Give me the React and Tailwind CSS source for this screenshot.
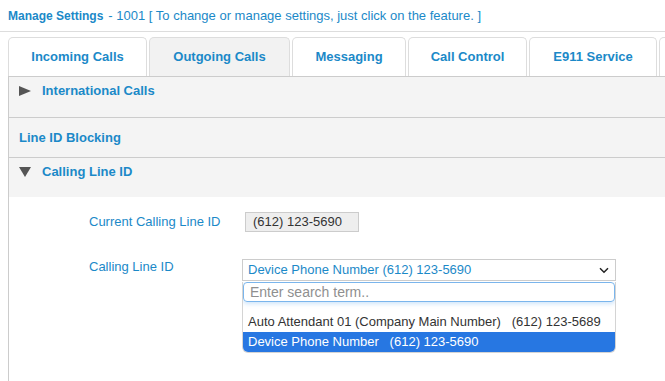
import React from "react";

const tabs = [
    { label: "Incoming Calls", w: "w-[139px]" },
    { label: "Outgoing Calls", w: "w-[141px]", active: true },
    { label: "Messaging", w: "w-[114px]" },
    { label: "Call Control", w: "w-[119px]" },
    { label: "E911 Service", w: "w-[128px]" },
];

function Triangle({ down }) {
    return (
        <svg width="12" height="11" viewBox="0 0 12 11" className="shrink-0">
            {down ? <polygon points="0,0 12,0 6,10" fill="#555" /> : <polygon points="0,0 12,5 0,10" fill="#555" />}
        </svg>
    );
}

export default function App() {
    return (
        <div className="w-[665px] h-[381px] overflow-hidden bg-white font-['Liberation_Sans',Arial,sans-serif] text-[#1b89c8]">
            {/* header */}
            <div className="h-[32px] border-b border-[#ddd] pl-[8px] flex items-center whitespace-nowrap">
                <span className="font-bold text-[12px]">Manage Settings</span>
                <span className="text-[13px] ml-[5px]">- 1001 [ To change or manage settings, just click on the feature. ]</span>
            </div>

            {/* tabs */}
            <div className="mt-[5px] pl-[8px] flex gap-[2px] overflow-hidden whitespace-nowrap">
                {tabs.map((t) => (
                    <div
                        key={t.label}
                        className={`shrink-0 ${t.w} h-[39px] flex items-center justify-center border border-b-0 border-[#ddd] rounded-t-[5px] text-[13px] font-bold ${t.active ? "bg-[#f2f2f2]" : "bg-white"}`}
                    >
                        {t.label}
                    </div>
                ))}
                <div className="shrink-0 w-[100px] h-[39px] border border-b-0 border-[#ddd] rounded-t-[5px] bg-white" />
            </div>

            {/* panel */}
            <div className="ml-[8px] border-l border-t border-[#ccc] h-[400px]">
                <div className="bg-[#f4f4f4] text-[13px] font-bold">
                    <div className="h-[41px] border-b border-[#ccc] flex items-start pt-[6px] pl-[10px] gap-[11px] leading-[16px]">
                        <span className="mt-[3px]"><Triangle /></span>
                        <span>International Calls</span>
                    </div>
                    <div className="h-[40px] border-b border-[#ccc] flex items-center pl-[10px] leading-[16px]">
                        Line ID Blocking
                    </div>
                    <div className="h-[39px] flex items-start pt-[6px] pl-[10px] gap-[11px] leading-[16px]">
                        <span className="mt-[3px]"><Triangle down /></span>
                        <span>Calling Line ID</span>
                    </div>
                </div>

                <div className="bg-white pt-[15px] pl-[80px] text-[13px] leading-[16px]">
                    <div className="flex items-center">
                        <div className="w-[156px]">Current Calling Line ID</div>
                        <div className="w-[114px] h-[20px] bg-[#eee] border border-[#ccc] pl-[7px] flex items-center text-[#333]">
                            (612) 123-5690
                        </div>
                    </div>

                    <div className="flex items-start mt-[27px]">
                        <div className="w-[153px]">Calling Line ID</div>
                        <div className="w-[374px]">
                            <div className="h-[22px] border border-[#ccc] flex items-center justify-between pl-[5px] pr-[6px]">
                                <span>Device Phone Number (612) 123-5690</span>
                                <svg width="10" height="7" viewBox="0 0 10 7">
                                    <path d="M1 1.2 L5 5.2 L9 1.2" fill="none" stroke="#222" strokeWidth="1.5" />
                                </svg>
                            </div>
                            <div className="mt-[1px] border-x border-b border-[#d4d4d4] rounded-b-[6px] overflow-hidden">
                                <div className="h-[20px] rounded-[4px] border border-[#7ab5ec] shadow-[0_2px_4px_rgba(120,180,240,0.35)] pl-[6px] flex items-center text-[14px] text-[#8f8f8f]">
                                    Enter search term..
                                </div>
                                <div className="h-[20px] mt-[10px] pl-[5px] flex items-center text-[#333] whitespace-pre">
                                    {"Auto Attendant 01 (Company Main Number)   (612) 123-5689"}
                                </div>
                                <div className="h-[20px] pl-[5px] flex items-center bg-[#2777e2] text-white whitespace-pre">
                                    {"Device Phone Number   (612) 123-5690"}
                                </div>
                            </div>
                        </div>
                    </div>
                </div>
            </div>
        </div>
    );
}
